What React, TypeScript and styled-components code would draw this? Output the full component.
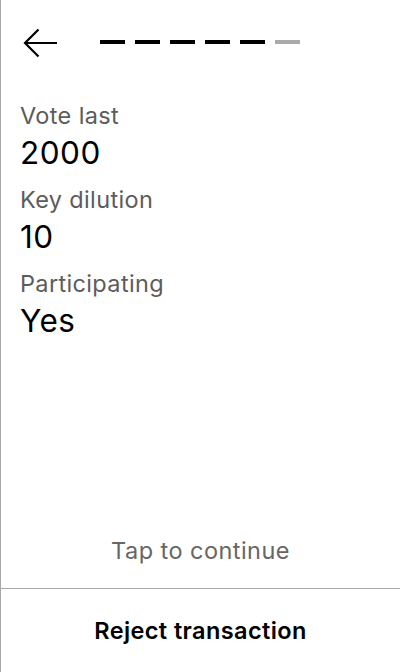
import React from "react";
import styled, { createGlobalStyle } from "styled-components";

const GlobalStyle = createGlobalStyle`
    html, body {
        margin: 0;
        padding: 0;
        background: #ffffff;
    }
    body {
        font-family: Inter, "Noto Sans", sans-serif;
        -webkit-font-smoothing: antialiased;
    }
`

const Screen = styled.div`
    width: 400px;
    height: 672px;
    box-sizing: border-box;
    border-left: 1px solid #a8a8a8;
    display: flex;
    flex-direction: column;
    background: #fff;
`

const Header = styled.header`
    display: flex;
    align-items: center;
    height: 62px;
    padding: 24px 0 0 22px;
    box-sizing: border-box;
`

const BackButton = styled.button`
    border: none;
    background: none;
    padding: 0;
    width: 35px;
    height: 30px;
    display: flex;
    align-items: center;
    cursor: pointer;
`

const Progress = styled.div`
    display: flex;
    gap: 10px;
    margin-left: 42px;
    margin-top: -3px;
`

const Step = styled.span<{ $done: boolean }>`
    width: 25px;
    height: 4px;
    background: ${({ $done }) => ($done ? "#000" : "#aaaaaa")};
`

const Details = styled.section`
    flex: 1;
    padding: 40px 19px 0;
`

const Label = styled.div`
    font-size: 23.5px;
    line-height: 28px;
    letter-spacing: 0.35px;
    color: #5c5c5c;
`

const Value = styled.div`
    font-size: 31.5px;
    line-height: 38px;
    letter-spacing: 0.5px;
    color: #000;
    margin: 4px 0 14px;
`

const Hint = styled.div`
    text-align: center;
    font-size: 23.5px;
    line-height: 28px;
    letter-spacing: 0.45px;
    color: #666;
    padding-bottom: 23px;
`

const Footer = styled.button`
    border: none;
    border-top: 1px solid #a8a8a8;
    background: none;
    height: 84px;
    width: 100%;
    font-family: Inter, "Noto Sans", sans-serif;
    font-size: 23.5px;
    font-weight: 600;
    letter-spacing: 0.4px;
    color: #000;
    padding: 0;
    cursor: pointer;
`

const BackArrow = () => (
    <svg width="35" height="30" viewBox="0 0 35 30" fill="none">
        <path d="M34 15H3M15.5 1.5L2 15L15.5 28.5" stroke="#000" strokeWidth="2.2" />
    </svg>
)

const rows = [
    { label: "Vote last", value: "2000" },
    { label: "Key dilution", value: "10" },
    { label: "Participating", value: "Yes" },
]

const App = (): JSX.Element => {
    const steps = [true, true, true, true, true, false]

    return (
        <>
            <GlobalStyle />
            <Screen>
                <Header>
                    <BackButton aria-label="Back">
                        <BackArrow />
                    </BackButton>
                    <Progress>
                        {steps.map((done, i) => (
                            <Step key={i} $done={done} />
                        ))}
                    </Progress>
                </Header>
                <Details>
                    {rows.map((row) => (
                        <div key={row.label}>
                            <Label>{row.label}</Label>
                            <Value>{row.value}</Value>
                        </div>
                    ))}
                </Details>
                <Hint>Tap to continue</Hint>
                <Footer>Reject transaction</Footer>
            </Screen>
        </>
    )
};

export default App;
